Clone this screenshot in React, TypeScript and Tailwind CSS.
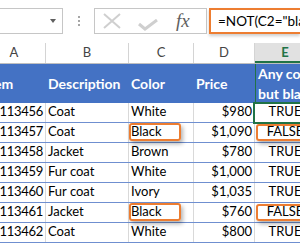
import React from 'react'

const rows = [
    ['113456', 'Coat', 'White', '$980', 'TRUE'],
    ['113457', 'Coat', 'Black', '$1,090', 'FALSE'],
    ['113458', 'Jacket', 'Brown', '$780', 'TRUE'],
    ['113459', 'Fur coat', 'White', '$1,000', 'TRUE'],
    ['113460', 'Fur coat', 'Ivory', '$1,035', 'TRUE'],
    ['113461', 'Jacket', 'Black', '$760', 'FALSE'],
    ['113462', 'Coat', 'White', '$800', 'TRUE'],
]

function Callout() {
    return (
        <div className="pointer-events-none absolute inset-x-0 top-0 bottom-[1px] rounded-[3px] border-2 border-[#ed7d31] shadow-[2px_3px_4px_rgba(0,0,0,0.3)]" />
    )
}

export default function App() {
    return (
        <div className="h-[244px] w-[300px] overflow-hidden bg-white text-[13px] text-black" style={{ fontFamily: 'Lato, "Open Sans", sans-serif' }}>
            {/* Formula bar */}
            <div className="flex h-[34px] items-end">
                <div className="ml-[-20px] flex h-[26px] w-[83px] shrink-0 items-center justify-end border border-[#c6c6c6] pr-[6px]">
                    <div className="h-0 w-0 border-x-[3px] border-t-[4px] border-x-transparent border-t-[#5f5f5f]" />
                </div>
                <div className="flex h-[26px] w-[31px] shrink-0 flex-col items-center justify-center gap-[2px]">
                    <span className="h-[2px] w-[2px] bg-[#a6a6a6]" />
                    <span className="h-[2px] w-[2px] bg-[#a6a6a6]" />
                    <span className="h-[2px] w-[2px] bg-[#a6a6a6]" />
                </div>
                <div className="flex h-[26px] w-[113px] shrink-0 items-center border border-[#c6c6c6]">
                    <svg width="20" height="16" viewBox="0 0 20 16" className="ml-[7px] shrink-0">
                        <path d="M2 1 L18 15 M18 1 L2 15" stroke="#cfcfcf" strokeWidth="2" fill="none" />
                    </svg>
                    <svg width="20" height="12" viewBox="0 0 20 12" className="ml-[16px] mt-[8px] shrink-0">
                        <path d="M1 5 L7 10 L19 1" stroke="#cfcfcf" strokeWidth="3" fill="none" />
                    </svg>
                    <span className="ml-[18px] text-[19px] italic text-[#606060]" style={{ fontFamily: '"Liberation Serif", serif' }}>
                        fx
                    </span>
                </div>
                <div className="ml-[2px] flex h-[26px] min-w-0 flex-1 items-center overflow-hidden border-2 border-r-0 border-[#ed7d31] pl-[7px] text-[13.5px] whitespace-nowrap shadow-[0_2px_3px_rgba(0,0,0,0.2)]">
                    =NOT(C2="black")
                </div>
            </div>

            {/* Column letters */}
            <div className="mt-[9px] ml-[-17px] flex h-[21px] border-b border-[#bfbfbf] text-[#444]">
                <div className="flex w-[63px] shrink-0 items-center justify-center border-r border-[#d4d4d4]">A</div>
                <div className="flex w-[83px] shrink-0 items-center justify-center border-r border-[#d4d4d4]">B</div>
                <div className="flex w-[65px] shrink-0 items-center justify-center border-r border-[#d4d4d4]">C</div>
                <div className="flex w-[61px] shrink-0 items-center justify-center border-r border-[#d4d4d4]">D</div>
                <div className="flex w-[60px] shrink-0 items-center justify-center bg-[#e1e1e1] font-bold text-[#217346] shadow-[inset_0_-2px_0_#217346]">
                    E
                </div>
                <div className="w-[20px] shrink-0 bg-[#e1e1e1] shadow-[inset_0_-2px_0_#217346]" />
            </div>

            {/* Table header */}
            <div className="ml-[-17px] flex h-[39px] bg-[#4472c4] text-[14px] font-bold text-white">
                <div className="flex w-[63px] shrink-0 items-center pl-[2px]">Item</div>
                <div className="flex w-[83px] shrink-0 items-center pl-[2px]">Description</div>
                <div className="flex w-[65px] shrink-0 items-center pl-[2px]">Color</div>
                <div className="flex w-[61px] shrink-0 items-center pl-[2px]">Price</div>
                <div className="flex w-[72px] shrink-0 flex-col justify-center border-l border-[#217346] pl-[2px] leading-[20px] whitespace-nowrap">
                    <span>Any color</span>
                    <span>but black</span>
                </div>
            </div>

            {/* Rows */}
            {rows.map((r, i) => (
                <div key={r[0]} className="ml-[-17px] flex h-[20px] border-b border-[#6f8fd0]">
                    <div className="flex w-[63px] shrink-0 items-end justify-end border-r border-[#d9d9d9] pr-[2px] pb-[1px] tracking-[-0.3px]">{r[0]}</div>
                    <div className="flex w-[83px] shrink-0 items-end border-r border-[#d9d9d9] pl-[2px] pb-[1px]">{r[1]}</div>
                    <div className="relative flex w-[65px] shrink-0 items-end border-r border-[#d9d9d9] pl-[2px] pb-[1px]">
                        {r[2]}
                        {r[2] === 'Black' && <div className="absolute top-0 bottom-0 left-0 w-[52px]"><Callout /></div>}
                    </div>
                    <div className="flex w-[61px] shrink-0 items-end justify-end border-r border-[#d9d9d9] pr-[2px] pb-[1px]">{r[3]}</div>
                    <div className="relative flex w-[60px] shrink-0 items-end justify-center pb-[1px]">
                        {r[4]}
                        {r[4] === 'FALSE' && <div className="absolute top-[1px] bottom-0 left-[1px] w-[56px]"><Callout /></div>}
                        {i === 0 && <div className="pointer-events-none absolute top-[-1px] bottom-[-2px] left-[-2px] right-[-6px] border-2 border-[#217346]" />}
                    </div>
                </div>
            ))}
        </div>
    )
}
